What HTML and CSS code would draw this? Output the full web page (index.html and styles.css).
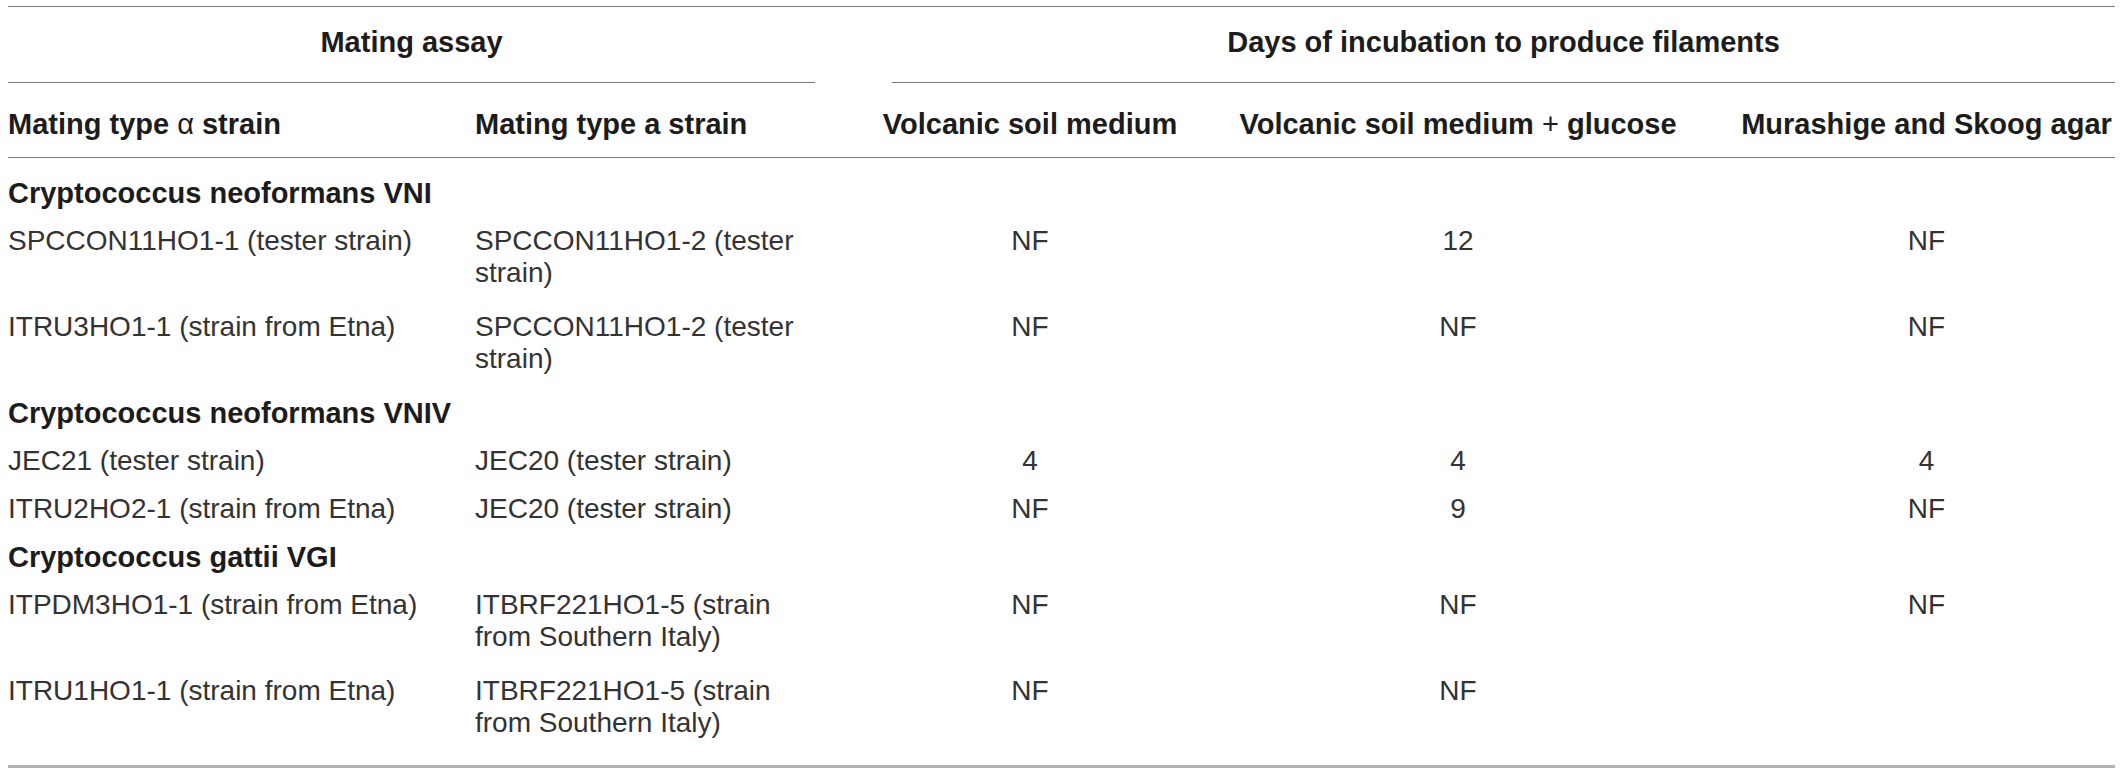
FILE: index.html
```html
<!DOCTYPE html>
<html lang="en">
<head>
<meta charset="utf-8">
<title>Mating assay</title>
<link rel="stylesheet" href="styles.css">
</head>
<body>
<table class="tbl">
  <colgroup>
    <col class="c1"><col class="c2"><col class="c3"><col class="c4"><col class="c5">
  </colgroup>
  <thead>
    <tr class="group-row">
      <th colspan="2" class="grp grp-left"><div class="grp-label">Mating assay</div></th>
      <th colspan="3" class="grp grp-right"><div class="grp-label">Days of incubation to produce filaments</div></th>
    </tr>
    <tr class="col-row">
      <th class="left">Mating type <span class="greek">α</span> strain</th>
      <th class="left">Mating type a strain</th>
      <th>Volcanic soil medium</th>
      <th>Volcanic soil medium <span class="plus">+</span> glucose</th>
      <th>Murashige and Skoog agar</th>
    </tr>
  </thead>
  <tbody>
    <tr class="species first"><td colspan="5">Cryptococcus neoformans VNI</td></tr>
    <tr class="data tall">
      <td class="left">SPCCON11HO1-1 (tester strain)</td>
      <td class="left wrapcell">SPCCON11HO1-2 (tester strain)</td>
      <td>NF</td><td>12</td><td>NF</td>
    </tr>
    <tr class="data tall">
      <td class="left">ITRU3HO1-1 (strain from Etna)</td>
      <td class="left wrapcell">SPCCON11HO1-2 (tester strain)</td>
      <td>NF</td><td>NF</td><td>NF</td>
    </tr>
    <tr class="species"><td colspan="5">Cryptococcus neoformans VNIV</td></tr>
    <tr class="data">
      <td class="left">JEC21 (tester strain)</td>
      <td class="left wrapcell">JEC20 (tester strain)</td>
      <td>4</td><td>4</td><td>4</td>
    </tr>
    <tr class="data">
      <td class="left">ITRU2HO2-1 (strain from Etna)</td>
      <td class="left wrapcell">JEC20 (tester strain)</td>
      <td>NF</td><td>9</td><td>NF</td>
    </tr>
    <tr class="species"><td colspan="5">Cryptococcus gattii VGI</td></tr>
    <tr class="data tall">
      <td class="left">ITPDM3HO1-1 (strain from Etna)</td>
      <td class="left wrapcell">ITBRF221HO1-5 (strain from Southern Italy)</td>
      <td>NF</td><td>NF</td><td>NF</td>
    </tr>
    <tr class="data last">
      <td class="left">ITRU1HO1-1 (strain from Etna)</td>
      <td class="left wrapcell">ITBRF221HO1-5 (strain from Southern Italy)</td>
      <td>NF</td><td>NF</td><td></td>
    </tr>
  </tbody>
</table>
</body>
</html>
```
FILE: styles.css
```css
html, body {
  background: #ffffff;
}
body {
  margin: 0;
  padding: 6px 5px 0 8px;
  font-family: "Liberation Sans", Arial, Helvetica, sans-serif;
  color: #333333;
}
.tbl {
  border-collapse: separate;
  border-spacing: 0;
  table-layout: fixed;
  width: 2107px;
  border-top: 1px solid #7a7a7a;
  border-bottom: 3px solid #b4b4b4;
}
.c1 { width: 467px; }
.c2 { width: 407px; }
.c3 { width: 296px; }
.c4 { width: 560px; }
.c5 { width: 377px; }

th, td {
  padding: 0;
  text-align: center;
  vertical-align: top;
  line-height: 32px;
}
th {
  font-size: 29px;
  font-weight: 700;
  color: #1c1c1c;
  white-space: nowrap;
}
.left { text-align: left; }

.grp-label {
  padding: 19px 0 24px;
  border-bottom: 1px solid #7a7a7a;
}
.grp-left .grp-label { margin-right: 67px; }
.grp-right .grp-label { margin-left: 10px; }

.col-row th {
  padding: 25px 0 17px;
  border-bottom: 1px solid #7a7a7a;
}
.greek {
  font-weight: 400;
}
.plus {
  font-weight: 400;
}

td {
  font-size: 28px;
  font-weight: 400;
}
.species td {
  font-size: 29px;
  font-weight: 700;
  color: #1c1c1c;
  text-align: left;
  padding: 8px 0 8px;
}
.species.first td { padding-top: 19px; }
.data td { padding: 8px 0 8px; }
.data.tall td { padding-bottom: 14px; }
.data.last td { padding-bottom: 26px; }
.data td.wrapcell { padding-right: 60px; }
```
